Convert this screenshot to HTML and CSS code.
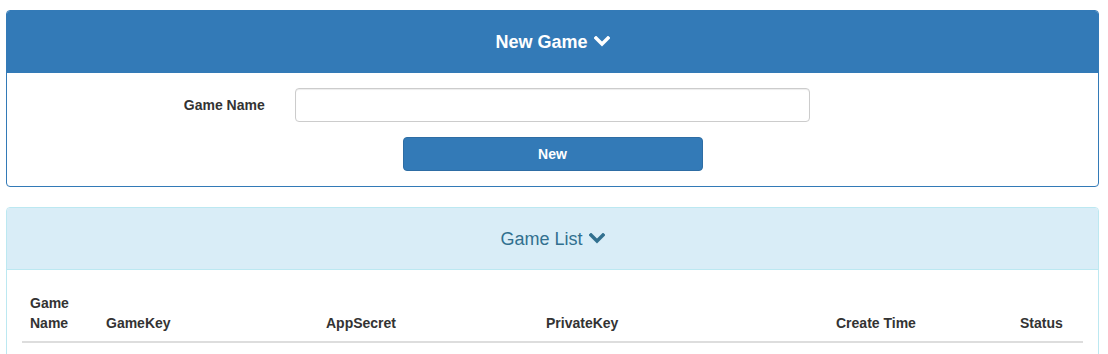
FILE: index.html
```html
<!DOCTYPE html>
<html>
<head>
<meta charset="utf-8">
<link rel="stylesheet" href="styles.css">
</head>
<body>
<div class="page">
  <section class="panel panel-primary">
    <div class="panel-heading">
      <span class="panel-title title-bold">New Game
        <svg class="chev" width="16" height="11" viewBox="0 0 16 11"><polyline points="2,2 8,8 14,2" fill="none" stroke="currentColor" stroke-width="3.4" stroke-linecap="square" stroke-linejoin="miter"/></svg>
      </span>
    </div>
    <div class="panel-body">
      <form class="form">
        <div class="form-row">
          <label class="control-label" for="gname">Game Name</label>
          <div class="control-col"><input id="gname" class="form-control" type="text"></div>
        </div>
        <div class="btn-row">
          <button type="button" class="btn">New</button>
        </div>
      </form>
    </div>
  </section>

  <section class="panel panel-info">
    <div class="panel-heading">
      <span class="panel-title">Game List
        <svg class="chev" width="16" height="11" viewBox="0 0 16 11"><polyline points="2,2 8,8 14,2" fill="none" stroke="currentColor" stroke-width="3.4" stroke-linecap="square" stroke-linejoin="miter"/></svg>
      </span>
    </div>
    <div class="panel-body">
      <table class="table">
        <colgroup>
          <col class="c1"><col class="c2"><col class="c3"><col class="c4"><col class="c5"><col class="c6">
        </colgroup>
        <thead>
          <tr>
            <th>Game Name</th>
            <th>GameKey</th>
            <th>AppSecret</th>
            <th>PrivateKey</th>
            <th>Create Time</th>
            <th>Status</th>
          </tr>
        </thead>
        <tbody></tbody>
      </table>
    </div>
  </section>
</div>
</body>
</html>
```
FILE: styles.css
```css
* { box-sizing: border-box; }
html, body { margin: 0; padding: 0; background: #fff; }
body {
  font-family: "Liberation Sans", Arial, Helvetica, sans-serif;
  font-size: 14px;
  line-height: 20px;
  color: #333;
}
.page { padding: 10px 9px 0 6px; }

.panel {
  border: 1px solid transparent;
  border-radius: 4px;
  margin-bottom: 20px;
  background: #fff;
}
.panel-heading {
  padding: 21px 15px 19px;
  text-align: center;
  border-bottom: 1px solid transparent;
  border-radius: 3px 3px 0 0;
}
.panel-title {
  font-size: 18px;
  line-height: 21px;
  font-weight: normal;
}
.title-bold { font-weight: bold; }
.chev { display: inline-block; vertical-align: 1px; margin-left: 1px; }

.panel-primary { border-color: #337ab7; }
.panel-primary .panel-heading { background: #337ab7; border-bottom-color: #337ab7; color: #fff; }
.panel-info { border-color: #bce8f1; }
.panel-info .panel-heading { background: #d9edf7; border-bottom-color: #bce8f1; color: #31708f; }

.panel-body { padding: 15px; }

.form { margin: 0; }
.form-row { display: flex; margin: 0 -15px 15px; }
.control-label {
  width: 25%;
  padding: 7px 15px 0;
  text-align: right;
  font-weight: bold;
}
.control-col { width: 50%; padding: 0 15px; }
.form-control {
  display: block;
  width: 100%;
  height: 34px;
  padding: 6px 12px;
  font: inherit;
  color: #555;
  border: 1px solid #ccc;
  border-radius: 4px;
  box-shadow: inset 0 1px 1px rgba(0,0,0,.075);
  background: #fff;
}
.btn-row { display: flex; justify-content: center; }
.btn {
  width: 300px;
  height: 34px;
  padding: 6px 12px;
  font-family: inherit;
  font-size: 14px;
  font-weight: bold;
  color: #fff;
  background: #337ab7;
  border: 1px solid #2e6da4;
  border-radius: 4px;
}

.table { width: 100%; border-collapse: collapse; table-layout: fixed; border-spacing: 0; }
.table th {
  text-align: left;
  vertical-align: bottom;
  padding: 8px;
  font-weight: bold;
  border-bottom: 2px solid #ddd;
}
.c1 { width: 76px; }
.c2 { width: 220px; }
.c3 { width: 220px; }
.c4 { width: 290px; }
.c5 { width: 184px; }
.c6 { width: 71px; }
```
